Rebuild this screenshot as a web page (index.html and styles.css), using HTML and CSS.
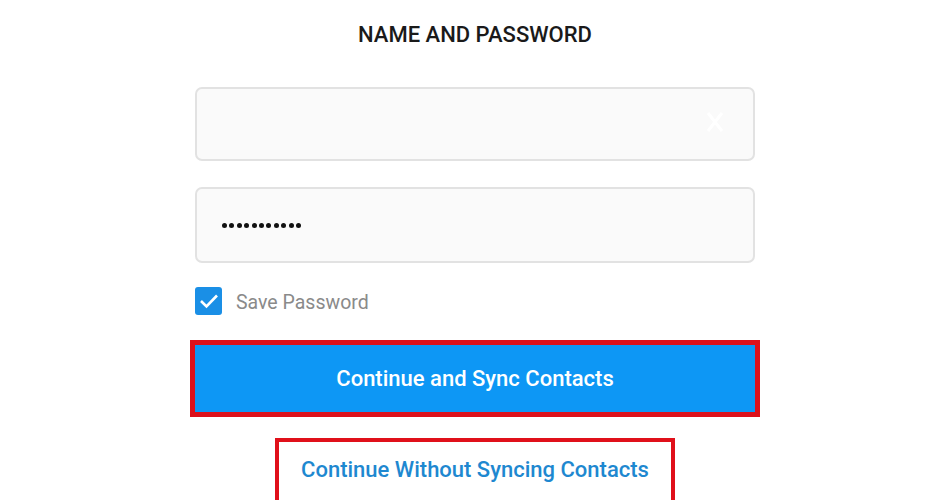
FILE: index.html
```html
<!DOCTYPE html>
<html>
<head>
    <title>Name and Password</title>
    <link rel="stylesheet" href="styles.css">
</head>
<body>
    <div class="login">
        <h1 class="login-title">NAME AND PASSWORD</h1>

        <div class="field">
            <span class="field-clear">
                <svg width="20" height="24" viewBox="0 0 20 24">
                    <path d="M3 3 L17 21 M17 3 L3 21" stroke="#ffffff" stroke-width="3" fill="none"/>
                </svg>
            </span>
        </div>

        <div class="field field-pass">
            <span class="dot"></span><span class="dot"></span><span class="dot"></span>
            <span class="dot"></span><span class="dot"></span><span class="dot"></span>
            <span class="dot"></span><span class="dot"></span><span class="dot"></span>
            <span class="dot"></span><span class="dot"></span>
        </div>

        <label class="save">
            <span class="check">
                <svg width="20" height="16" viewBox="0 0 20 16">
                    <path d="M2 8 L7.5 13.5 L18 2.5" stroke="#ffffff" stroke-width="2.6" fill="none"/>
                </svg>
            </span>
            <span class="save-text">Save Password</span>
        </label>

        <button class="btn-sync">Continue and Sync Contacts</button>

        <div class="skip-wrap">
            <a class="btn-skip">Continue Without Syncing Contacts</a>
        </div>
    </div>
</body>
</html>
```

FILE: styles.css
```css
body {
    margin: 0;
    background-color: #ffffff;
    font-family: Roboto, "Noto Sans", sans-serif;
}

.login {
    width: 560px;
    margin: 0 auto;
    display: flex;
    flex-direction: column;
}

.login-title {
    margin: 0;
    height: 70px;
    line-height: 70px;
    text-align: center;
    font-size: 22px;
    font-weight: 500;
    color: #1a1a1a;
}

.field {
    box-sizing: border-box;
    height: 74px;
    margin-top: 17px;
    background-color: #fafafa;
    border: 2px solid #e2e2e2;
    border-radius: 7px;
    display: flex;
    align-items: center;
    justify-content: flex-end;
    padding: 0 28px;
}

.field-clear {
    display: flex;
    margin-top: -4px;
}

.field-pass {
    height: 76px;
    margin-top: 26px;
    justify-content: flex-start;
    gap: 2.4px;
    padding-left: 25px;
}

.dot {
    width: 5px;
    height: 5px;
    border-radius: 50%;
    background-color: #111;
}

.save {
    display: flex;
    align-items: center;
    gap: 14px;
    margin-top: 24px;
    height: 28px;
    font-size: 19.5px;
    color: #8a8a8a;
}

.save-text {
    padding-top: 3px;
}

.check {
    width: 27px;
    height: 28px;
    border-radius: 3px;
    background-color: #1a8fe6;
    display: flex;
    align-items: center;
    justify-content: center;
}

.btn-sync {
    margin-top: 30px;
    height: 67px;
    border: none;
    background-color: #0d97f5;
    outline: 5px solid #dc111c;
    color: #ffffff;
    font-family: Roboto, "Noto Sans", sans-serif;
    font-size: 22px;
    font-weight: 500;
}

.skip-wrap {
    display: flex;
    justify-content: center;
    margin-top: 26px;
}

.btn-skip {
    box-sizing: border-box;
    width: 400px;
    height: 70px;
    border: 4px solid #e0101a;
    display: flex;
    justify-content: center;
    padding-top: 15px;
    font-size: 22px;
    font-weight: 500;
    color: #1e88d0;
}
```
